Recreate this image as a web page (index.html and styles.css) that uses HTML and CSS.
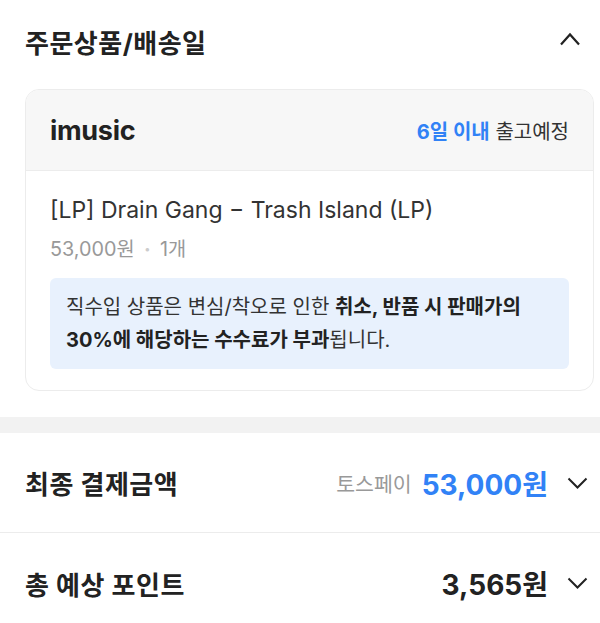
FILE: index.html
```html
<!DOCTYPE html>
<html lang="ko">
<head>
<meta charset="utf-8">
<link rel="stylesheet" href="styles.css">
</head>
<body>
<section class="order">
  <div class="section-head">
    <h2 class="section-title">주문상품/배송일</h2>
    <svg class="chev" width="22" height="14" viewBox="0 0 22 14"><path d="M2 12.5 L11 2.5 L20 12.5" fill="none" stroke="#222" stroke-width="2.2"/></svg>
  </div>
  <div class="card">
    <div class="card-head">
      <span class="seller">imusic</span>
      <span class="ship"><b class="blue">6일 이내</b> 출고예정</span>
    </div>
    <div class="card-body">
      <div class="prod">[LP] Drain Gang − Trash Island (LP)</div>
      <div class="meta">53,000원 <span class="dot">•</span> 1개</div>
      <div class="notice">직수입 상품은 변심/착오로 인한 <b>취소, 반품 시 판매가의<br>30%에 해당하는 수수료가 부과</b>됩니다.</div>
    </div>
  </div>
</section>
<div class="band"></div>
<div class="row">
  <span class="row-title">최종 결제금액</span>
  <span class="row-right"><span class="pay">토스페이</span><span class="amt blue">53,000원</span>
  <svg class="chev-d" width="21" height="12" viewBox="0 0 21 12"><path d="M1.5 1.5 L10.5 10.5 L19.5 1.5" fill="none" stroke="#222" stroke-width="2"/></svg></span>
</div>
<div class="row last">
  <span class="row-title">총 예상 포인트</span>
  <span class="row-right"><span class="amt">3,565원</span>
  <svg class="chev-d" width="21" height="12" viewBox="0 0 21 12"><path d="M1.5 1.5 L10.5 10.5 L19.5 1.5" fill="none" stroke="#222" stroke-width="2"/></svg></span>
</div>
</body>
</html>
```
FILE: styles.css
```css
* { box-sizing: border-box; }
body {
  margin: 0;
  background: #fff;
  font-family: "Inter", "Noto Sans CJK KR", sans-serif;
  color: #222;
  width: 600px;
  overflow: hidden;
}
.order { padding: 0 6px 26px 25px; }
.section-head {
  display: flex;
  align-items: center;
  justify-content: space-between;
  height: 89px;
  padding-bottom: 6px;
}
.section-title {
  margin: 0;
  font-size: 26px;
  font-weight: 700;
  color: #222;
  letter-spacing: 0.5px;
}
.chev { margin-right: 13px; margin-top: -6px; }
.card {
  border: 1.5px solid #ececec;
  border-radius: 14px;
  overflow: hidden;
}
.card-head {
  background: #f7f7f7;
  border-bottom: 1.5px solid #ececec;
  height: 81px;
  display: flex;
  align-items: center;
  justify-content: space-between;
  padding: 0 24px;
}
.seller { font-size: 27px; font-weight: 700; color: #222; letter-spacing: -0.3px; }
.ship { font-size: 20px; color: #333; }
.blue { color: #3182f6; font-weight: 700; }
.card-body { padding: 22px 24px 21px; }
.prod { font-size: 23px; font-weight: 400; color: #333; line-height: 34px; }
.meta { font-size: 19.8px; color: #999; line-height: 30px; margin-top: 7px; }
.dot { font-size: 11px; color: #ccc; vertical-align: 3px; margin: 0 4px; }
.notice {
  margin-top: 14px;
  background: #e8f1fd;
  border-radius: 6px;
  padding: 12.5px 16px;
  font-size: 20px;
  line-height: 33px;
  color: #333;
  white-space: nowrap;
}
.notice b { color: #222; }
.band { height: 16px; background: #f2f2f2; }
.row {
  height: 100px;
  display: flex;
  align-items: center;
  justify-content: space-between;
  padding: 0 12px 0 25px;
  border-bottom: 1.5px solid #ececec;
}
.row.last { border-bottom: none; }
.row-title { font-size: 26px; font-weight: 700; color: #222; letter-spacing: 0.5px; }
.row-right { display: flex; align-items: center; }
.pay { font-size: 20.5px; color: #999; margin-right: 10px; }
.amt { font-size: 28px; font-weight: 700; color: #222; }
.amt.blue { color: #3182f6; }
.chev-d { margin-left: 19px; }
```
